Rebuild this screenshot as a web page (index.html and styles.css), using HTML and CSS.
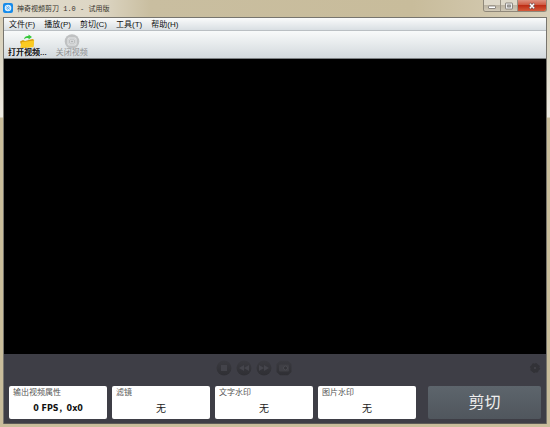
FILE: index.html
```html
<!DOCTYPE html>
<html lang="zh-CN">
<head>
<meta charset="utf-8">
<title>神奇视频剪刀 1.0 - 试用版</title>
<link rel="stylesheet" href="styles.css">
</head>
<body>
<div class="window">
  <header class="titlebar">
    <svg class="logo" viewBox="0 0 10 10"><rect width="10" height="10" rx="2" fill="#168bea"/><circle cx="5" cy="5" r="3.3" fill="#d9efff"/><path d="M3.4 3.5l3.2 3M3.3 5l1.8 1.7M5 3.3l1.7 1.6" stroke="#3499ee" stroke-width=".8"/></svg>
    <h1 class="title">神奇视频剪刀 1.0 - 试用版</h1>
    <div class="window-buttons">
      <button class="win-btn" aria-label="最小化"><svg viewBox="0 0 10 8"><rect x="1.5" y="4" width="7" height="2.5" rx=".5" fill="#fff" stroke="#77716b" stroke-width=".8"/></svg></button>
      <button class="win-btn" aria-label="最大化"><svg viewBox="0 0 10 8"><rect x="1.5" y="1" width="7" height="6" rx=".5" fill="#eee" stroke="#77716b" stroke-width=".8"/><rect x="3.7" y="3" width="2.6" height="2" fill="#bbb" stroke="#77716b" stroke-width=".8"/></svg></button>
      <button class="win-btn close" aria-label="关闭"><svg viewBox="0 0 10 8"><path d="M2.7 1.5l4.6 5M7.3 1.5l-4.6 5" stroke="#755" stroke-width="2.7"/><path d="M2.9 1.7l4.2 4.6M7.1 1.7L2.9 6.3" stroke="#fff" stroke-width="1.4"/></svg></button>
    </div>
  </header>
  <main class="client">
    <nav class="menu">
      <button>文件(F)</button><button>播放(P)</button><button>剪切(C)</button><button>工具(T)</button><button>帮助(H)</button>
    </nav>
    <div class="toolbar">
      <button class="tool">
        <svg viewBox="0 0 16 15"><path d="M1 7.5l3-1.5 2 1 7.5-2 1.5.8-.7 7L3 14z" fill="#d99c0c"/><path d="M1.2 13.8L2.8 8l12.4-1.5-.9 6.8z" fill="#fbcb22"/><path d="M5 5.2C5.4 2.7 7.5 1.7 9.5 2V.4L13 3 9.5 5.4V4C7.7 3.8 6.4 4.1 5 5.2z" fill="#35c83b"/></svg>
        <span>打开视频...</span>
      </button>
      <button class="tool" disabled>
        <svg viewBox="0 0 16 15"><circle cx="8" cy="7.5" r="7.3" fill="#bfc1c2"/><rect x="4" y="4" width="8" height="7" rx="1" fill="none" stroke="#e8eaeb"/><path d="M4 4l8 7M12 4l-8 7" stroke="#dfe1e2" stroke-width=".8"/><circle cx="8" cy="7.5" r="1.5" fill="#b1b3b4" stroke="#eceeef" stroke-width=".7"/></svg>
        <span>关闭视频</span>
      </button>
    </div>
    <section class="video" aria-label="视频"></section>
    <footer class="panel">
      <div class="controls">
        <div class="playback">
          <button disabled aria-label="停止"><svg viewBox="0 0 16 16"><circle cx="8" cy="8" r="7.5" fill="url(#disc)"/><rect x="5" y="5" width="6" height="6" fill="#43434a"/></svg></button>
          <button disabled aria-label="后退"><svg viewBox="0 0 16 16"><circle cx="8" cy="8" r="7.5" fill="url(#disc)"/><path d="M8 5v6L3 8zM13 5v6L8 8z" fill="#45454c"/></svg></button>
          <button disabled aria-label="前进"><svg viewBox="0 0 16 16"><circle cx="8" cy="8" r="7.5" fill="url(#disc)"/><path d="M3 5v6l5-3zM8 5v6l5-3z" fill="#45454c"/></svg></button>
          <button disabled aria-label="截图"><svg viewBox="0 0 16 16"><path d="M4 .8h8L15.5 4v8L12 15.2H4L.5 12V4z" fill="url(#disc)"/><rect x="3" y="4.5" width="10" height="7" rx="1" fill="#3f3f45"/><circle cx="9.5" cy="8" r="2" fill="#333338" stroke="#4a4a50"/></svg></button>
        </div>
        <button class="settings" disabled aria-label="设置"><svg viewBox="0 0 12 12"><circle cx="6" cy="6" r="4.5" fill="#323237"/><circle cx="6" cy="6" r="4.6" fill="none" stroke="#323237" stroke-dasharray="1.8 1.8"/><circle cx="6" cy="6" r="1" fill="#46464c"/></svg></button>
      </div>
      <div class="actions">
        <button class="card"><span class="label">输出视频属性</span><span class="value info">0 FPS，0x0</span></button>
        <button class="card"><span class="label">滤镜</span><span class="value">无</span></button>
        <button class="card"><span class="label">文字水印</span><span class="value">无</span></button>
        <button class="card"><span class="label">图片水印</span><span class="value">无</span></button>
        <button class="cut">剪切</button>
      </div>
    </footer>
  </main>
</div>
<svg width="0" height="0" class="defs" aria-hidden="true"><defs><linearGradient id="disc" x2="0" y2="1"><stop stop-color="#3a3a40"/><stop offset="1" stop-color="#2f2f34"/></linearGradient></defs></svg>
</body>
</html>
```
FILE: styles.css
```css
* { box-sizing: border-box; }
body {
  margin: 0;
  font-family: "Liberation Sans", "Noto Sans CJK SC", sans-serif;
  font-size: 8px;
  line-height: 10px;
}
button {
  margin: 0;
  padding: 0;
  border: 0;
  background: none;
  color: inherit;
  font: inherit;
}
svg { display: block; }
.defs { position: absolute; }
.window {
  display: flex;
  flex-direction: column;
  height: 100vh;
  padding: 0 3px 3px;
  background: linear-gradient(#d5cbb1 0, #ded8c6 60px, #eeebe3 117px, #c9bd9b 118px, #c9bd9b 100%);
}
.titlebar {
  display: flex;
  flex: none;
  height: 17px;
  margin: 0 -3px;
  padding: 0 3px;
  background: linear-gradient(90deg, #e0dbcd 0, #ddd6c4 100px, #c9bea0 150px, #c8bc9b 75%, #d8cfb9 100%);
}
.logo { width: 10px; height: 10px; margin: 3px 4px 0 0; }
.title {
  margin: 4px 0 0;
  color: #37342d;
  font: 7px/10px "Liberation Mono", "Noto Sans CJK SC", monospace;
}
.window-buttons {
  display: flex;
  height: 12px;
  margin-left: auto;
  border: 1px solid #8f887a;
  border-top: 0;
  border-radius: 0 0 3px 3px;
  overflow: hidden;
}
.win-btn {
  display: grid;
  place-items: center;
  width: 17px;
  border-right: 1px solid #9a9385;
  background: linear-gradient(#dfd9ca 45%, #bdb5a4 50%, #d2cab8);
}
.win-btn svg { width: 10px; height: 8px; }
.win-btn.close {
  width: 28px;
  border: 0;
  background: linear-gradient(#dd9180, #cf5941 45%, #bd2d16 50%, #d65b3b);
}
.client {
  display: flex;
  flex: 1;
  flex-direction: column;
  border: 1px solid #77756e;
  border-bottom: 0;
}
.menu {
  display: flex;
  gap: 9px;
  height: 13px;
  padding: 1px 5px 0;
  border-bottom: 1px solid #babfc3;
  background: linear-gradient(#fafbfb, #d9dfe3);
  color: #111;
}
.toolbar {
  display: flex;
  gap: 9px;
  height: 28px;
  padding: 3px 4px 0;
  border-bottom: 1px solid #7d8183;
  background: linear-gradient(#f8fafa, #d3d9dd);
  color: #111;
}
.tool {
  display: flex;
  flex-direction: column;
  align-items: center;
  text-shadow: 0 0 #111;
}
.tool svg { width: 16px; height: 15px; flex: none; }
.tool span { line-height: 8px; }
.tool:disabled { color: #8e9091; text-shadow: none; }
.video { flex: 1; background: #000; }
.panel {
  padding: 5px 5px 4px;
  border-bottom: 1px solid #5d5b57;
  background: #3e3e46;
}
.controls {
  display: grid;
  grid-template-columns: 1fr auto 1fr;
  align-items: center;
  height: 18px;
}
.playback {
  display: flex;
  grid-column: 2;
  gap: 4px;
  margin-right: 42px;
}
.playback svg { width: 16px; height: 16px; }
.settings { justify-self: end; }
.settings svg { width: 12px; height: 12px; }
.actions {
  display: grid;
  grid-template-columns: repeat(4, 98fr) 120fr;
  gap: 5px;
  height: 33px;
  margin-top: 9px;
}
.card {
  display: flex;
  flex-direction: column;
  padding: 2px 4px;
  border-radius: 2px;
  background: #fff;
  text-align: left;
}
.label { color: #555; }
.value {
  align-self: center;
  margin-top: 5px;
  color: #222;
  font-size: 10px;
  line-height: 12px;
}
.info {
  color: #111;
  font: bold 8px/12px "DejaVu Sans", "Noto Sans CJK SC", sans-serif;
}
.cut {
  margin-left: 7px;
  border-radius: 2px;
  background: linear-gradient(#5d656c, #50565d);
  color: #eee;
  font-size: 16px;
  line-height: 20px;
}
```
